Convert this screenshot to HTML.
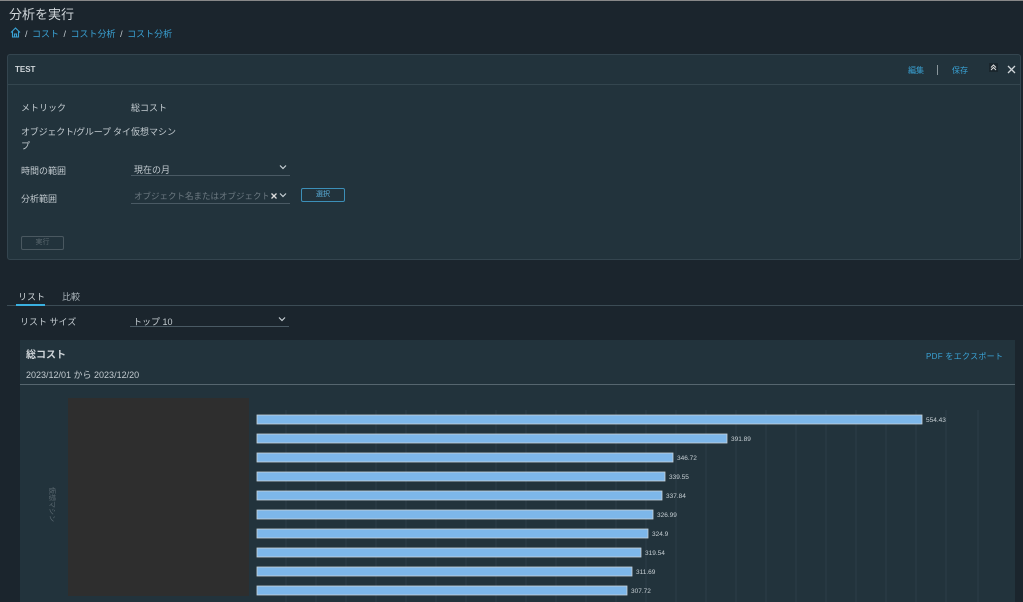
<!DOCTYPE html>
<html><head><meta charset="utf-8"><style>
*{box-sizing:border-box;margin:0;padding:0}
body{width:1023px;height:602px;overflow:hidden;background:#1b252d;font-family:"Liberation Sans","Noto Sans CJK JP",sans-serif;color:#c8d0d5;position:relative}
.top{position:absolute;left:0;top:0;width:1023px;height:1px;background:#888}
.a{position:absolute;white-space:nowrap}
.lnk{color:#3aa3d6}
.panel{position:absolute;left:7px;top:54px;width:1014px;height:206px;background:#22333c;border:1px solid #34454f;border-radius:3px}
.lbl{font-size:9px;color:#c3cbd0}
.sel{position:absolute;border-bottom:1px solid #4a5a64}
.chev{position:absolute;right:3px;top:3px}
</style></head><body>
<div class="top"></div>
<div class="a" style="left:9px;top:4px;font-size:13px;color:#d0d6da">分析を実行</div>
<svg class="a" style="left:10px;top:27px" width="11" height="11" viewBox="0 0 11 11"><path d="M1 5.5L5.5 1L10 5.5M2.5 4.5V10H8.5V4.5M4.5 10V7H6.5V10" fill="none" stroke="#3aa3d6" stroke-width="1.1"/></svg>
<div class="a" style="left:25px;top:27px;font-size:9px;color:#c8d0d5;word-spacing:2px">/ <span class="lnk">コスト</span> / <span class="lnk">コスト分析</span> / <span class="lnk">コスト分析</span></div>

<div class="panel">
 <div class="a" style="left:7px;top:10px;font-size:8px;font-weight:bold;color:#d0d6da">TEST</div>
 <div class="a" style="left:0;top:29px;width:1012px;height:1px;background:#34464f"></div>
 <div class="a lnk" style="left:900px;top:10px;font-size:8px">編集</div>
 <div class="a" style="left:929px;top:10px;width:1px;height:10px;background:#8a969c"></div>
 <div class="a lnk" style="left:944px;top:10px;font-size:8px">保存</div>
 <div class="a" style="left:981px;top:8px;width:9px;height:9px;background:#1a262d"><svg width="9" height="9" viewBox="0 0 9 9" style="display:block"><path d="M2 4.5L4.5 2L7 4.5M2 7L4.5 4.5L7 7" fill="none" stroke="#ddd" stroke-width="1"/></svg></div>
 <svg class="a" style="left:999px;top:10px" width="9" height="9" viewBox="0 0 9 9"><path d="M1 1L8 8M8 1L1 8" stroke="#d0d6da" stroke-width="1.3"/></svg>
 <div class="a lbl" style="left:13px;top:46px">メトリック</div>
 <div class="a lbl" style="left:123px;top:46px">総コスト</div>
 <div class="a lbl" style="left:13px;top:70px;line-height:14px;letter-spacing:-0.2px">オブジェクト/グループ タイ<br>プ</div>
 <div class="a lbl" style="left:123px;top:70px">仮想マシン</div>
 <div class="a lbl" style="left:13px;top:109px">時間の範囲</div>
 <div class="sel" style="left:123px;top:106px;width:159px;height:15px"><span class="lbl" style="position:absolute;left:3px;top:2px">現在の月</span><svg class="chev" width="8" height="6" viewBox="0 0 8 6"><path d="M1 1.5L4 4.5L7 1.5" fill="none" stroke="#c8d0d5" stroke-width="1.2"/></svg></div>
 <div class="a lbl" style="left:13px;top:137px">分析範囲</div>
 <div class="sel" style="left:123px;top:133px;width:159px;height:16px"><span style="position:absolute;left:3px;top:2px;font-size:8.5px;color:#6d7a82;white-space:nowrap;width:134px;overflow:hidden">オブジェクト名またはオブジェクト タ</span><svg style="position:absolute;left:140px;top:5px" width="6" height="6" viewBox="0 0 6 6"><path d="M0.5 0.5L5.5 5.5M5.5 0.5L0.5 5.5" stroke="#ddd" stroke-width="1.3"/></svg><svg class="chev" style="top:4px" width="8" height="6" viewBox="0 0 8 6"><path d="M1 1.5L4 4.5L7 1.5" fill="none" stroke="#c8d0d5" stroke-width="1.2"/></svg></div>
 <div class="a" style="left:293px;top:133px;width:44px;height:14px;border:1px solid #3c8fb8;border-radius:2px;font-size:7px;color:#5bb0dc;text-align:center;line-height:12px">選択</div>
 <div class="a" style="left:13px;top:181px;width:43px;height:14px;border:1px solid #4a5860;border-radius:2px;font-size:7px;color:#5a676e;text-align:center;line-height:12px">実行</div>
</div>

<div class="a" style="left:18px;top:290px;font-size:9px;color:#d0d6da">リスト</div>
<div class="a" style="left:62px;top:290px;font-size:9px;color:#a8b2b8">比較</div>
<div class="a" style="left:7px;top:305px;width:1016px;height:1px;background:#3c4c55"></div>
<div class="a" style="left:16px;top:304px;width:29px;height:2px;background:#3ab0e0"></div>
<div class="a" style="left:20px;top:315px;font-size:9px;color:#c3cbd0">リスト サイズ</div>
<div class="sel" style="left:130px;top:313px;width:159px;height:14px"><span class="lbl" style="position:absolute;left:3px;top:2px">トップ 10</span><svg class="chev" width="8" height="6" viewBox="0 0 8 6"><path d="M1 1.5L4 4.5L7 1.5" fill="none" stroke="#c8d0d5" stroke-width="1.2"/></svg></div>

<div class="a" style="left:20px;top:340px;width:995px;height:262px;background:#22333c"></div>
<div class="a" style="left:26px;top:346px;font-size:10px;font-weight:bold;color:#d0d6da">総コスト</div>
<div class="a" style="left:26px;top:368px;font-size:9px;color:#c3cbd0">2023/12/01 から 2023/12/20</div>
<div class="a lnk" style="left:926px;top:351px;font-size:8px;letter-spacing:0.3px">PDF をエクスポート</div>
<div class="a" style="left:20px;top:384px;width:995px;height:1px;background:#56666f"></div>
<div class="a" style="left:68px;top:398px;width:181px;height:198px;background:#2e2e2e"></div>
<div class="a" style="left:57px;top:487px;font-size:7px;color:#5c6a72;transform:rotate(90deg);transform-origin:left top">仮想マシン</div>
<svg class="a" style="left:250px;top:405px" width="740" height="197">
<g stroke="#2c3d48" stroke-width="1">
<line x1="36" y1="5" x2="36" y2="197"/><line x1="66" y1="5" x2="66" y2="197"/><line x1="96" y1="5" x2="96" y2="197"/><line x1="126" y1="5" x2="126" y2="197"/><line x1="156" y1="5" x2="156" y2="197"/><line x1="186" y1="5" x2="186" y2="197"/><line x1="216" y1="5" x2="216" y2="197"/><line x1="246" y1="5" x2="246" y2="197"/><line x1="276" y1="5" x2="276" y2="197"/><line x1="306" y1="5" x2="306" y2="197"/><line x1="336" y1="5" x2="336" y2="197"/><line x1="366" y1="5" x2="366" y2="197"/><line x1="396" y1="5" x2="396" y2="197"/><line x1="426" y1="5" x2="426" y2="197"/><line x1="456" y1="5" x2="456" y2="197"/><line x1="486" y1="5" x2="486" y2="197"/><line x1="516" y1="5" x2="516" y2="197"/><line x1="546" y1="5" x2="546" y2="197"/><line x1="576" y1="5" x2="576" y2="197"/><line x1="606" y1="5" x2="606" y2="197"/><line x1="636" y1="5" x2="636" y2="197"/><line x1="666" y1="5" x2="666" y2="197"/><line x1="696" y1="5" x2="696" y2="197"/><line x1="728" y1="5" x2="728" y2="197"/>
</g>
<g fill="#7db7ea" stroke="#c8d4dc" stroke-width="0.8">
<rect x="7" y="10" width="665" height="9"/><rect x="7" y="29" width="470" height="9"/><rect x="7" y="48" width="416" height="9"/><rect x="7" y="67" width="408" height="9"/><rect x="7" y="86" width="405" height="9"/><rect x="7" y="105" width="396" height="9"/><rect x="7" y="124" width="391" height="9"/><rect x="7" y="143" width="384" height="9"/><rect x="7" y="162" width="375" height="9"/><rect x="7" y="181" width="370" height="9"/>
</g>
<g fill="#c8d0d5" font-size="6.5" font-family="Liberation Sans,sans-serif">
<text x="676" y="17">554.43</text><text x="481" y="36">391.89</text><text x="427" y="55">346.72</text><text x="419" y="74">339.55</text><text x="416" y="93">337.84</text><text x="407" y="112">326.99</text><text x="402" y="131">324.9</text><text x="395" y="150">319.54</text><text x="386" y="169">311.69</text><text x="381" y="188">307.72</text>
</g>
</svg>
</body></html>
